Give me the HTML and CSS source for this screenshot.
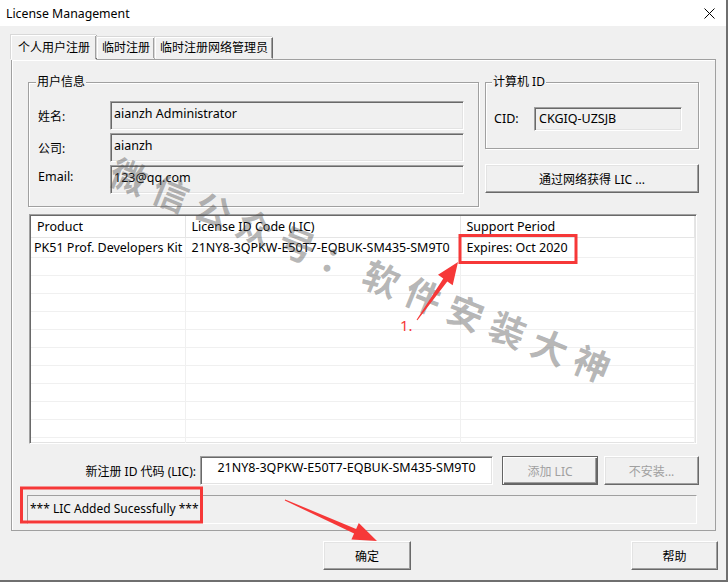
FILE: index.html
```html
<!DOCTYPE html>
<html lang="zh-CN">
<head>
    <meta charset="UTF-8">
    <title>License Management</title>
    <link rel="stylesheet" href="styles.css">
</head>
<body>
<div class="window">
    <div class="titlebar">
        <span class="title">License Management</span>
        <svg class="close" width="11" height="11" viewBox="0 0 11 11">
            <path d="M0.5 0.5 L10.5 10.5 M10.5 0.5 L0.5 10.5" stroke="#000" stroke-width="1" fill="none"/>
        </svg>
    </div>

    <div class="client">
        <div class="tabs">
            <div class="tab active">个人用户注册</div>
            <div class="tab">临时注册</div>
            <div class="tab">临时注册网络管理员</div>
        </div>

        <div class="panel">
            <div class="top-row">
                <fieldset class="group user-info">
                    <legend>用户信息</legend>
                    <div class="form">
                        <label class="zh">姓名:</label>
                        <div class="field">aianzh Administrator</div>
                        <label class="zh">公司:</label>
                        <div class="field">aianzh</div>
                        <label class="email">Email:</label>
                        <div class="field">123@qq.com</div>
                    </div>
                </fieldset>

                <div class="side">
                    <fieldset class="group cid-group">
                        <legend>计算机 ID</legend>
                        <div class="cid-row">
                            <label class="cid-label">CID:</label>
                            <div class="field cid">CKGIQ-UZSJB</div>
                        </div>
                    </fieldset>
                    <button class="btn net-btn">通过网络获得 LIC ...</button>
                </div>
            </div>

            <div class="listview">
                <table class="list">
                    <colgroup>
                        <col style="width:154px">
                        <col style="width:275px">
                        <col>
                    </colgroup>
                    <thead>
                        <tr><th>Product</th><th>License ID Code (LIC)</th><th>Support Period</th></tr>
                    </thead>
                    <tbody>
                        <tr><td class="first">PK51 Prof. Developers Kit</td><td>21NY8-3QPKW-E50T7-EQBUK-SM435-SM9T0</td><td>Expires: Oct 2020</td></tr>
                        <tr><td></td><td></td><td></td></tr>
                        <tr><td></td><td></td><td></td></tr>
                        <tr><td></td><td></td><td></td></tr>
                        <tr><td></td><td></td><td></td></tr>
                        <tr><td></td><td></td><td></td></tr>
                        <tr><td></td><td></td><td></td></tr>
                        <tr><td></td><td></td><td></td></tr>
                        <tr><td></td><td></td><td></td></tr>
                        <tr><td></td><td></td><td></td></tr>
                        <tr><td></td><td></td><td></td></tr>
                        <tr><td></td><td></td><td></td></tr>
                    </tbody>
                </table>
            </div>

            <div class="lic-row">
                <label class="lic-label">新注册 ID 代码 (LIC):</label>
                <div class="field lic-input">21NY8-3QPKW-E50T7-EQBUK-SM435-SM9T0</div>
                <button class="btn default" disabled>添加 LIC</button>
                <button class="btn skip" disabled>不安装...</button>
            </div>

            <div class="status">*** LIC Added Sucessfully ***</div>
        </div>

        <div class="footer">
            <button class="btn ok">确定</button>
            <button class="btn help">帮助</button>
        </div>
    </div>

    <div class="watermark">微信公众号：软件安装大神</div>

    <svg class="marks" width="728" height="583" viewBox="0 0 728 583">
        <rect x="460" y="235.5" width="116" height="27" fill="none" stroke="#f63838" stroke-width="3"/>
        <rect x="21.5" y="488" width="180" height="34" fill="none" stroke="#f63838" stroke-width="3"/>
        <polygon points="416.6,319.7 443.3,278.6 438,274.8 458,262 452.7,285.2 447.3,281.4 417.4,320.3" fill="#f63838"/>
        <polygon points="284.8,500.5 354.1,533.5 351.4,539.4 377,541 358.8,523 356.1,528.9 285.2,499.5" fill="#f63838"/>
        <text x="400" y="331" class="step">1.</text>
    </svg>
</div>
</body>
</html>
```

FILE: styles.css
```css
* {
    box-sizing: border-box;
}
body {
    margin: 0;
    background: #fff;
    font-family: "Noto Sans", "Noto Sans CJK SC", sans-serif;
    font-size: 12.5px;
    color: #000;
}
.window {
    position: relative;
    width: 728px;
    height: 582px;
    background: #f0f0f0;
    border-right: 2px solid #6f6f6f;
    border-bottom: 2px solid #6f6f6f;
    overflow: hidden;
}
.titlebar {
    height: 26px;
    background: #fff;
    display: flex;
    align-items: center;
    justify-content: space-between;
    padding: 0 11px 0 6px;
}
.title {
    font-size: 12.3px;
}
.client {
    padding: 9px 10px 0 11px;
}
.zh {
    font-size: 12px;
}

/* tabs */
.tabs {
    display: flex;
    align-items: flex-end;
    height: 24px;
    position: relative;
    z-index: 1;
    font-size: 12px;
}
.tab {
    height: 22px;
    line-height: 20px;
    padding: 0 4px;
    background: #f0f0f0;
    border: 1px solid;
    border-color: #fff #696969 transparent #fff;
    box-shadow: inset -1px 0 0 #a0a0a0, -1px -1px 0 #d8d8d8;
}
.tab.active {
    height: 25px;
    line-height: 24px;
    padding: 0 6px;
    margin-bottom: -1px;
}
.panel {
    border: 1px solid #a0a0a0;
    box-shadow: inset 1px 1px 0 #fff;
    padding: 14px 16px 6px 16px;
}

/* group boxes */
.top-row {
    display: flex;
    gap: 6px;
}
.group {
    margin: 0;
    border: 1px solid #a0a0a0;
    box-shadow: inset 1px 1px 0 #fff, 1px 1px 0 #fff;
    min-width: 0;
}
.group legend {
    font-size: 12px;
    line-height: 16px;
    padding: 0 1px;
    margin-left: -2px;
    background: #f0f0f0;
}
.user-info {
    width: 451px;
    padding: 11px 14px 12px 9px;
}
.form {
    display: grid;
    grid-template-columns: 72px 1fr;
    grid-auto-rows: 29px;
    row-gap: 3px;
    align-items: center;
}
.form .email {
    align-self: start;
    padding-top: 3px;
}
.field {
    border: 1px solid;
    border-color: #a0a0a0 #fff #fff #a0a0a0;
    box-shadow: inset 1px 1px 0 #696969, inset -1px -1px 0 #e3e3e3;
    padding: 3px 3px 0;
    line-height: 18px;
    height: 100%;
    white-space: nowrap;
    overflow: hidden;
}
.side {
    width: 214px;
    display: flex;
    flex-direction: column;
}
.cid-group {
    padding: 17px 16px 17px 8px;
}
.cid-row {
    display: grid;
    grid-template-columns: 40px 1fr;
    align-items: center;
    height: 24px;
}
.cid-label {
    margin-top: -2px;
}
.field.cid {
    padding: 2px 4px;
}

/* buttons */
.btn {
    font-family: inherit;
    font-size: 12px;
    height: 29px;
    padding: 0;
    background: #f0f0f0;
    color: #000;
    border: 1px solid;
    border-color: #fff #696969 #696969 #fff;
    box-shadow: inset -1px -1px 0 #a0a0a0, inset 1px 1px 0 #e3e3e3;
}
.btn:disabled {
    color: #a0a0a0;
}
.btn.default {
    border: 1px solid #646464;
    box-shadow: inset 1px 1px 0 #fff, inset -1px -1px 0 #696969, inset -2px -2px 0 #a0a0a0;
}
.net-btn {
    margin-top: 15px;
    width: 214px;
}

/* list view */
.listview {
    margin: 7px 2px 0 1px;
    height: 230px;
    background: #fff;
    border: 1px solid;
    border-color: #a0a0a0 #fff #fff #a0a0a0;
    box-shadow: inset 1px 1px 0 #696969, inset -1px -1px 0 #e3e3e3;
    padding: 1px;
    overflow: hidden;
}
.list {
    width: 100%;
    border-collapse: collapse;
    table-layout: fixed;
}
.list th {
    height: 21px;
    font-weight: normal;
    text-align: left;
    padding: 0 6px;
    border-right: 1px solid #e5e5e5;
    border-bottom: 1px solid #e5e5e5;
    white-space: nowrap;
    overflow: hidden;
}
.list td {
    height: 18px;
    padding: 0 6px;
    border-right: 1px solid #f0f0f0;
    border-bottom: 1px solid #f0f0f0;
    white-space: nowrap;
    overflow: hidden;
}
.list td.first {
    padding-left: 3px;
}
.list tbody tr:first-child td {
    height: 20px;
}

/* bottom of panel */
.lic-row {
    display: flex;
    align-items: center;
    margin-top: 12px;
    height: 29px;
}
.lic-label {
    width: 168px;
    text-align: right;
    font-size: 12px;
    margin-right: 4px;
}
.field.lic-input {
    width: 293px;
    background: #fff;
    text-align: center;
    padding: 2px 4px;
    margin-right: 9px;
}
.btn.default {
    width: 96px;
    margin-right: 6px;
}
.btn.skip {
    width: 95px;
}
.status {
    margin: 10px 2px 0 -1px;
    height: 29px;
    line-height: 25px;
    padding: 0 2px;
    font-size: 12px;
    border: 1px solid;
    border-color: #a0a0a0 #fff #fff #a0a0a0;
}

.footer {
    display: flex;
    padding: 10px 0 0 312px;
    margin-right: -2px;
}
.btn.ok {
    width: 88px;
}
.btn.help {
    width: 87px;
    margin-left: auto;
}

/* overlays */
.watermark {
    position: absolute;
    left: 113px;
    top: 150px;
    font-family: "Noto Sans CJK SC", sans-serif;
    font-size: 36px;
    line-height: 36px;
    letter-spacing: 9.4px;
    font-weight: 700;
    white-space: nowrap;
    color: rgba(80, 80, 80, 0.42);
    transform-origin: 0 50%;
    transform: rotate(22deg);
    pointer-events: none;
}
.marks {
    position: absolute;
    left: 0;
    top: 0;
    pointer-events: none;
}
.step {
    font-family: "Noto Sans", sans-serif;
    font-size: 15px;
    fill: #f63838;
}
```
